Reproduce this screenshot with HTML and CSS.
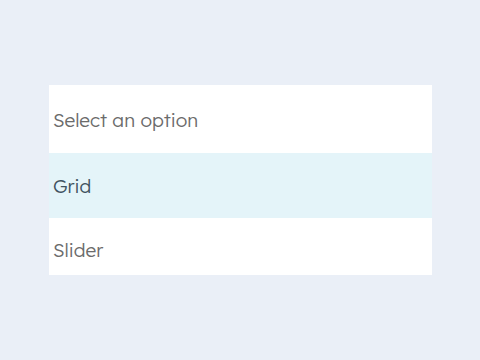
FILE: index.html
```html
<!DOCTYPE html>
<html lang="en">
<head>
    <meta charset="UTF-8">
    <meta name="viewport" content="width=device-width, initial-scale=1.0">
    <title>Select</title>
    <link rel="stylesheet" href="styles.css">
</head>
<body>
    <div class="dropdown">
        <div class="option placeholder">Select an option</div>
        <div class="option active">Grid</div>
        <div class="option last">Slider</div>
    </div>
</body>
</html>
```

FILE: styles.css
```css
body {
    font-family: 'Lexend', 'Noto Sans', sans-serif;
    background: #eaeff7;
    margin: 0;
    padding: 85px 0 0 49px;
    color: #666;
}

.dropdown {
    width: 383px;
    background: white;
    display: flex;
    flex-direction: column;
}

.option {
    display: flex;
    align-items: center;
    padding-left: 4px;
    font-size: 19px;
    font-weight: 300;
    color: #6b6b6b;
}

.placeholder {
    height: 68px;
    box-sizing: border-box;
    padding-top: 2px;
}

.active {
    height: 65px;
    background: #e4f4f9;
    color: #3f5260;
}

.last {
    height: 57px;
    box-sizing: border-box;
    padding-top: 7px;
}
```
